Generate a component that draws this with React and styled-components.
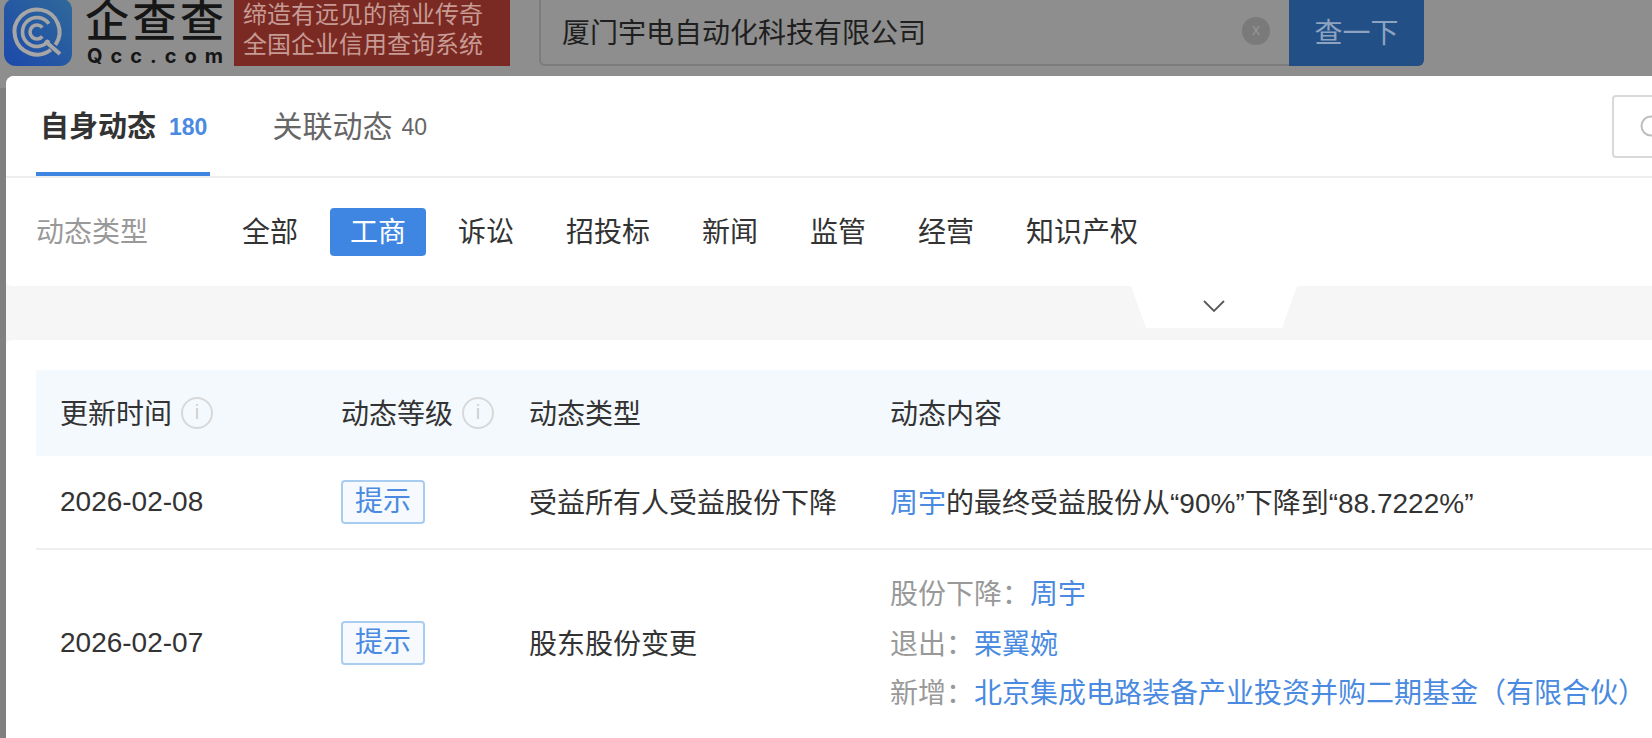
import React from "react";
import styled, { createGlobalStyle } from "styled-components";

const FONT = `"Liberation Sans", "Noto Sans CJK SC", sans-serif`;
const BLUE = "#4a8ae0";

const Global = createGlobalStyle`
  html, body { margin: 0; padding: 0; height: 100%; }
  body { font-family: ${FONT}; color: #333; background: #808080; overflow: hidden; }
  #root { height: 100%; }
`;

const Page = styled.div`
  position: relative;
  width: 1652px;
  height: 738px;
  overflow: hidden;
  background: #808080;
`;

const Header = styled.header`
  display: flex;
  align-items: flex-start;
  height: 88px;
  background: #8e8e8e;
  padding-left: 4px;
  box-sizing: border-box;
`;

const LogoTile = styled.svg`
  flex: none;
  width: 68px;
  height: 68px;
  margin-top: -2px;
`;

const Wordmark = styled.div`
  flex: none;
  width: 139px;
  margin-left: 13px;
  display: flex;
  flex-direction: column;
  align-items: stretch;
  color: #161616;
`;

const WordmarkCn = styled.div`
  height: 44px;
  display: flex;
  justify-content: space-between;
  font-size: 44px;
  line-height: 44px;
  font-weight: 500;
`;

const WordmarkEn = styled.div`
  display: flex;
  justify-content: space-between;
  margin-top: 2px;
  padding: 0 1px 0 2px;
  font-size: 20px;
  line-height: 20px;
  font-weight: 700;
  font-family: Inter, "Liberation Sans", sans-serif;
`;

const Slogan = styled.div`
  flex: none;
  width: 276px;
  height: 66px;
  margin-left: 10px;
  padding: 0 0 0 9px;
  box-sizing: border-box;
  background: #7a2a22;
  color: #c79a94;
  font-size: 24px;
  line-height: 30px;
`;

const SearchBar = styled.div`
  flex: none;
  display: flex;
  width: 885px;
  height: 86px;
  margin: -20px 0 0 29px;
`;

const SearchInput = styled.div`
  flex: 1;
  display: flex;
  align-items: center;
  justify-content: space-between;
  padding: 15px 19px 0 21px;
  box-sizing: border-box;
  border: 2px solid #7c7c7c;
  border-right: 0;
  border-radius: 6px 0 0 6px;
  font-size: 28px;
  color: #1f1f1f;
`;

const ClearDot = styled.span`
  flex: none;
  width: 28px;
  height: 28px;
  border-radius: 50%;
  background: #7a7a7a;
  color: #969696;
  font-size: 16px;
  line-height: 26px;
  text-align: center;
`;

const SearchButton = styled.div`
  flex: none;
  width: 135px;
  padding-top: 15px;
  box-sizing: border-box;
  display: flex;
  align-items: center;
  justify-content: center;
  background: #234f87;
  color: #8ea3bf;
  font-size: 28px;
  border-radius: 0 6px 6px 0;
`;

const Modal = styled.section`
  position: absolute;
  left: 6px;
  top: 76px;
  width: 1900px;
  height: 700px;
  background: #f6f6f6;
  border-radius: 8px 8px 0 0;
  overflow: hidden;
`;

const TopPanel = styled.div`
  background: #fff;
  border-radius: 0 0 6px 6px;
`;

const TabBar = styled.div`
  display: flex;
  align-items: flex-start;
  height: 102px;
  box-sizing: border-box;
  padding: 0 30px;
  border-bottom: 2px solid #eeeeee;
`;

const Tab = styled.div`
  display: flex;
  align-items: center;
  gap: ${p => (p.$active ? "13px" : "9px")};
  height: 100px;
  box-sizing: border-box;
  padding: 0 3px 0 4px;
  margin-right: 58px;
  border-bottom: 4px solid ${p => (p.$active ? "#3f86e3" : "transparent")};
  color: ${p => (p.$active ? "#333" : "#666")};
  font-size: ${p => (p.$active ? "29px" : "30px")};
  font-weight: ${p => (p.$active ? 700 : 400)};
`;

const TabCount = styled.span`
  margin-top: 6px;
  font-size: 23px;
  color: ${p => (p.$active ? BLUE : "#666")};
`;

const SearchBox = styled.div`
  flex: none;
  display: flex;
  align-items: center;
  width: 264px;
  height: 63px;
  margin: 19px 0 0 auto;
  padding-left: 26px;
  box-sizing: border-box;
  border: 2px solid #d9d9d9;
  border-radius: 4px;
`;

const FilterRow = styled.div`
  display: flex;
  align-items: center;
  height: 108px;
  padding: 0 0 0 30px;
  box-sizing: border-box;
`;

const FilterLabel = styled.div`
  flex: none;
  width: 186px;
  margin-top: 2px;
  color: #999;
  font-size: 28px;
  line-height: 50px;
`;

const FilterList = styled.div`
  display: flex;
  gap: 12px;
`;

const FilterItem = styled.div`
  height: 48px;
  padding: 0 20px;
  line-height: 50px;
  font-size: 28px;
  border-radius: 4px;
  background: ${p => (p.$active ? "#3f86e3" : "transparent")};
  color: ${p => (p.$active ? "#fff" : "#333")};
`;

const Band = styled.div`
  display: flex;
  justify-content: flex-start;
  height: 54px;
  padding-left: 1125px;
`;

const Expander = styled.div`
  flex: none;
  width: 166px;
  height: 42px;
  padding-bottom: 3px;
  box-sizing: border-box;
  display: flex;
  align-items: center;
  justify-content: center;
  background: #fff;
  clip-path: polygon(0 0, 100% 0, 91% 100%, 9% 100%);
`;

const TablePanel = styled.div`
  min-height: 420px;
  background: #fff;
  border-radius: 6px 6px 0 0;
  padding: 30px 30px 0;
  box-sizing: border-box;
`;

const Row = styled.div`
  display: grid;
  grid-template-columns: 281px 188px 361px 1fr;
  align-items: center;
  font-size: 28px;
  color: #333;
  border-bottom: ${p => (p.$line ? "2px solid #eeeeee" : "0")};
  min-height: ${p => p.$height}px;
  padding-bottom: ${p => p.$bottom || 0}px;
  background: ${p => (p.$head ? "#f4f9fe" : "transparent")};
  box-sizing: border-box;
`;

const Cell = styled.div`
  display: flex;
  align-items: center;
  gap: 9px;
  padding-left: 24px;
`;

const ContentCell = styled.div`
  padding: 0 0 2px 24px;
`;

const TypeCell = styled(Cell)`
  padding-bottom: 2px;
  white-space: nowrap;
`;

const InfoDot = styled.span`
  flex: none;
  width: 32px;
  height: 32px;
  margin-top: 2px;
  box-sizing: border-box;
  border: 2px solid #d8d8d8;
  border-radius: 50%;
  color: #cfcfcf;
  font-size: 20px;
  line-height: 27px;
  text-align: center;
`;

const LevelTag = styled.span`
  display: inline-block;
  width: 84px;
  height: 44px;
  box-sizing: border-box;
  border: 2px solid #a9cdf0;
  border-radius: 4px;
  background: #f6faff;
  color: ${BLUE};
  font-size: 28px;
  line-height: 40px;
  text-align: center;
`;

const Link = styled.span`
  color: ${BLUE};
`;

const Label = styled.span`
  color: #999;
`;

const DetailLines = styled.div`
  display: flex;
  flex-direction: column;
  padding: 20px 0 16px;
  line-height: 49.5px;
  white-space: nowrap;
`;

function polar(cx, cy, r, deg) {
  const a = (deg * Math.PI) / 180;
  return [cx + r * Math.cos(a), cy + r * Math.sin(a)];
}

function arc(cx, cy, r, from, to) {
  const [x1, y1] = polar(cx, cy, r, from);
  const [x2, y2] = polar(cx, cy, r, to);
  const large = to - from > 180 ? 1 : 0;
  return `M${x1.toFixed(2)} ${y1.toFixed(2)}A${r} ${r} 0 ${large} 1 ${x2.toFixed(2)} ${y2.toFixed(2)}`;
}

function LogoIcon() {
  return (
    <LogoTile viewBox="0 0 68 68" aria-label="logo">
      <defs>
        <linearGradient id="tileFill" x1="0" y1="1" x2="1" y2="0">
          <stop offset="0" stopColor="#1b49ab" />
          <stop offset="1" stopColor="#30699a" />
        </linearGradient>
      </defs>
      <rect width="68" height="68" rx="12" fill="url(#tileFill)" />
      <g fill="none" stroke="#a6a6a6" strokeLinecap="butt">
        <path d={arc(33, 34, 22.5, 52, 395)} strokeWidth="4" />
        <path d={arc(33, 34, 14.5, 35, 325)} strokeWidth="3.6" />
        <path d={arc(33, 34, 7, 40, 320)} strokeWidth="3.6" />
        <path d="M41 43L56 56" strokeWidth="4" />
      </g>
    </LogoTile>
  );
}

function SearchGlass() {
  return (
    <svg width="24" height="24" viewBox="0 0 24 24" fill="none" stroke="#bdbdbd" strokeWidth="2">
      <circle cx="11" cy="11" r="9.5" />
      <path d="M18 18l5 5" />
    </svg>
  );
}

function Chevron() {
  return (
    <svg width="22" height="14" viewBox="0 0 22 14" fill="none" stroke="#5a5a5a" strokeWidth="1.8">
      <path d="M1 2l10 10L21 2" />
    </svg>
  );
}

const filters = ["全部", "工商", "诉讼", "招投标", "新闻", "监管", "经营", "知识产权"];

export default function App() {
  return (
    <Page>
      <Global />
      <Header>
        <LogoIcon />
        <Wordmark>
          <WordmarkCn>
            <span>企</span>
            <span>查</span>
            <span>查</span>
          </WordmarkCn>
          <WordmarkEn>
            {"Qcc.com".split("").map((c, i) => (
              <span key={i}>{c}</span>
            ))}
          </WordmarkEn>
        </Wordmark>
        <Slogan>
          缔造有远见的商业传奇
          <br />
          全国企业信用查询系统
        </Slogan>
        <SearchBar>
          <SearchInput>
            <span>厦门宇电自动化科技有限公司</span>
            <ClearDot>x</ClearDot>
          </SearchInput>
          <SearchButton>查一下</SearchButton>
        </SearchBar>
      </Header>
      <Modal>
        <TopPanel>
          <TabBar>
            <Tab $active>
              自身动态<TabCount $active>180</TabCount>
            </Tab>
            <Tab>
              关联动态<TabCount>40</TabCount>
            </Tab>
            <SearchBox>
              <SearchGlass />
            </SearchBox>
          </TabBar>
          <FilterRow>
            <FilterLabel>动态类型</FilterLabel>
            <FilterList>
              {filters.map(f => (
                <FilterItem key={f} $active={f === "工商"}>
                  {f}
                </FilterItem>
              ))}
            </FilterList>
          </FilterRow>
        </TopPanel>
        <Band>
          <Expander>
            <Chevron />
          </Expander>
        </Band>
        <TablePanel>
          <Row $head $height={86} $bottom={3}>
            <Cell>
              更新时间<InfoDot>i</InfoDot>
            </Cell>
            <Cell>
              动态等级<InfoDot>i</InfoDot>
            </Cell>
            <Cell>动态类型</Cell>
            <Cell>动态内容</Cell>
          </Row>
          <Row $line $height={94}>
            <Cell>2026-02-08</Cell>
            <Cell>
              <LevelTag>提示</LevelTag>
            </Cell>
            <TypeCell>受益所有人受益股份下降</TypeCell>
            <ContentCell>
              <Link>周宇</Link>的最终受益股份从“90%”下降到“88.7222%”
            </ContentCell>
          </Row>
          <Row $height={180}>
            <Cell>2026-02-07</Cell>
            <Cell>
              <LevelTag>提示</LevelTag>
            </Cell>
            <TypeCell>股东股份变更</TypeCell>
            <ContentCell>
              <DetailLines>
                <div>
                  <Label>股份下降：</Label>
                  <Link>周宇</Link>
                </div>
                <div>
                  <Label>退出：</Label>
                  <Link>栗翼婉</Link>
                </div>
                <div>
                  <Label>新增：</Label>
                  <Link>北京集成电路装备产业投资并购二期基金（有限合伙）</Link>
                </div>
              </DetailLines>
            </ContentCell>
          </Row>
        </TablePanel>
      </Modal>
    </Page>
  );
}
